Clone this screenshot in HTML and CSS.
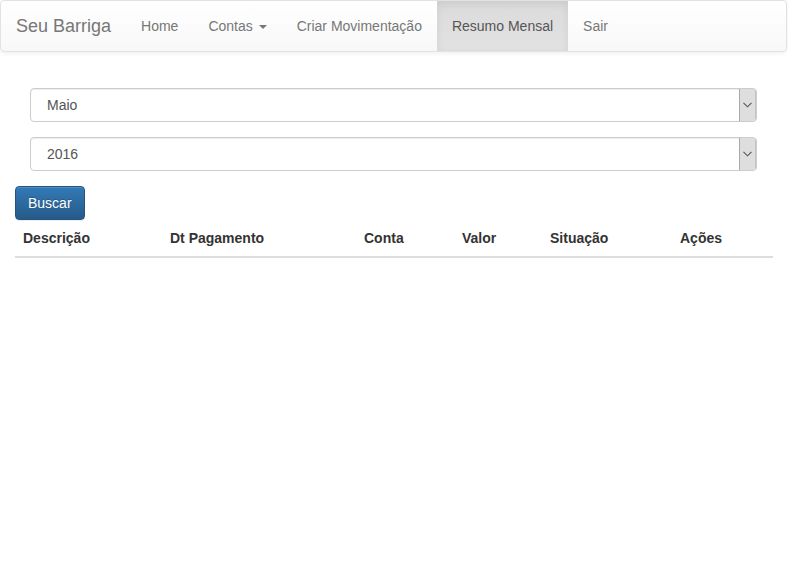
FILE: index.html
```html
<!DOCTYPE html>
<html lang="pt-BR">
<head>
<meta charset="utf-8">
<title>Seu Barriga - Resumo Mensal</title>
<link rel="stylesheet" href="styles.css">
</head>
<body>
<nav class="navbar">
  <a class="brand" href="#">Seu Barriga</a>
  <ul class="nav">
    <li><a href="#">Home</a></li>
    <li><a href="#">Contas <span class="caret"></span></a></li>
    <li><a href="#">Criar Movimentação</a></li>
    <li class="active"><a href="#">Resumo Mensal</a></li>
    <li><a href="#">Sair</a></li>
  </ul>
</nav>
<main class="container">
  <form class="filter">
    <div class="fields">
      <div class="select-wrap">
        <select class="select-input" name="mes">
          <option>Maio</option>
        </select>
        <span class="select-btn"><svg width="9" height="6" viewBox="0 0 9 6"><path d="M0.5 0.8 L4.5 4.8 L8.5 0.8" fill="none" stroke="#555" stroke-width="1.1"/></svg></span>
      </div>
      <div class="select-wrap">
        <select class="select-input" name="ano">
          <option>2016</option>
        </select>
        <span class="select-btn"><svg width="9" height="6" viewBox="0 0 9 6"><path d="M0.5 0.8 L4.5 4.8 L8.5 0.8" fill="none" stroke="#555" stroke-width="1.1"/></svg></span>
      </div>
    </div>
    <button type="button" class="btn-primary">Buscar</button>
  </form>
  <table class="table">
    <thead>
      <tr>
        <th class="c1">Descrição</th>
        <th class="c2">Dt Pagamento</th>
        <th class="c3">Conta</th>
        <th class="c4">Valor</th>
        <th class="c5">Situação</th>
        <th class="c6">Ações</th>
      </tr>
    </thead>
    <tbody></tbody>
  </table>
</main>
</body>
</html>
```
FILE: styles.css
```css
* { box-sizing: border-box; }
html, body {
  margin: 0;
  padding: 0;
  background: #fff;
  font-family: "Liberation Sans", Arial, Helvetica, sans-serif;
  font-size: 14px;
  line-height: 20px;
  color: #333;
}
a { text-decoration: none; }

.navbar {
  display: flex;
  align-items: stretch;
  height: 52px;
  margin: 0 1px 20px 0;
  border: 1px solid #e2e2e2;
  border-radius: 4px;
  background: linear-gradient(to bottom, #fff 0, #f8f8f8 100%);
  box-shadow: inset 0 1px 0 rgba(255,255,255,.15), 0 1px 5px rgba(0,0,0,.075);
}
.brand {
  padding: 15px;
  font-size: 18px;
  line-height: 20px;
  color: #777;
}
.nav {
  display: flex;
  list-style: none;
  margin: 0;
  padding: 0;
}
.nav li a {
  display: block;
  padding: 15px;
  line-height: 20px;
  color: #777;
  height: 50px;
}
.nav li.active a {
  color: #555;
  background: linear-gradient(to bottom, #dbdbdb 0, #e2e2e2 100%);
  box-shadow: inset 0 3px 9px rgba(0,0,0,.075);
}
.caret {
  display: inline-block;
  width: 0;
  height: 0;
  margin-left: 2px;
  vertical-align: middle;
  border-top: 4px solid #777;
  border-left: 4px solid transparent;
  border-right: 4px solid transparent;
}

.container {
  padding: 0 15px;
}
.filter {
  display: flex;
  flex-direction: column;
  align-items: flex-start;
}
.fields {
  align-self: stretch;
  padding: 16px 16px 0 15px;
  display: flex;
  flex-direction: column;
  gap: 15px;
}
.select-wrap {
  display: flex;
  height: 34px;
  border: 1px solid #ccc;
  border-radius: 4px;
  background: #fff;
  box-shadow: inset 0 1px 1px rgba(0,0,0,.075);
  overflow: hidden;
}
.select-input {
  flex: 1;
  appearance: none;
  -webkit-appearance: none;
  border: 0;
  background: transparent;
  padding: 0 0 0 16px;
  font-family: inherit;
  font-size: 14px;
  color: #555;
  outline: none;
}
.select-btn {
  width: 17px;
  display: flex;
  align-items: center;
  justify-content: center;
  background: #dedede;
  border-left: 1px solid #a8a8a8;
  border-right: 1px solid #c4c4c4;
}
.btn-primary {
  margin-top: 15px;
  height: 34px;
  padding: 6px 12px;
  font-family: inherit;
  font-size: 14px;
  line-height: 20px;
  color: #fff;
  border: 1px solid #245580;
  border-radius: 4px;
  background: linear-gradient(to bottom, #337ab7 0, #265a88 100%);
  text-shadow: 0 -1px 0 rgba(0,0,0,.2);
  box-shadow: inset 0 1px 0 rgba(255,255,255,.15), 0 1px 1px rgba(0,0,0,.075);
  cursor: pointer;
}

.table {
  width: 100%;
  border-collapse: collapse;
  border-spacing: 0;
}
.table th {
  text-align: left;
  font-weight: bold;
  padding: 8px;
  line-height: 20px;
  border-bottom: 2px solid #ddd;
  color: #333;
}
.c1 { width: 147px; }
.c2 { width: 194px; }
.c3 { width: 98px; }
.c4 { width: 88px; }
.c5 { width: 130px; }
.c6 { width: 101px; }
```
